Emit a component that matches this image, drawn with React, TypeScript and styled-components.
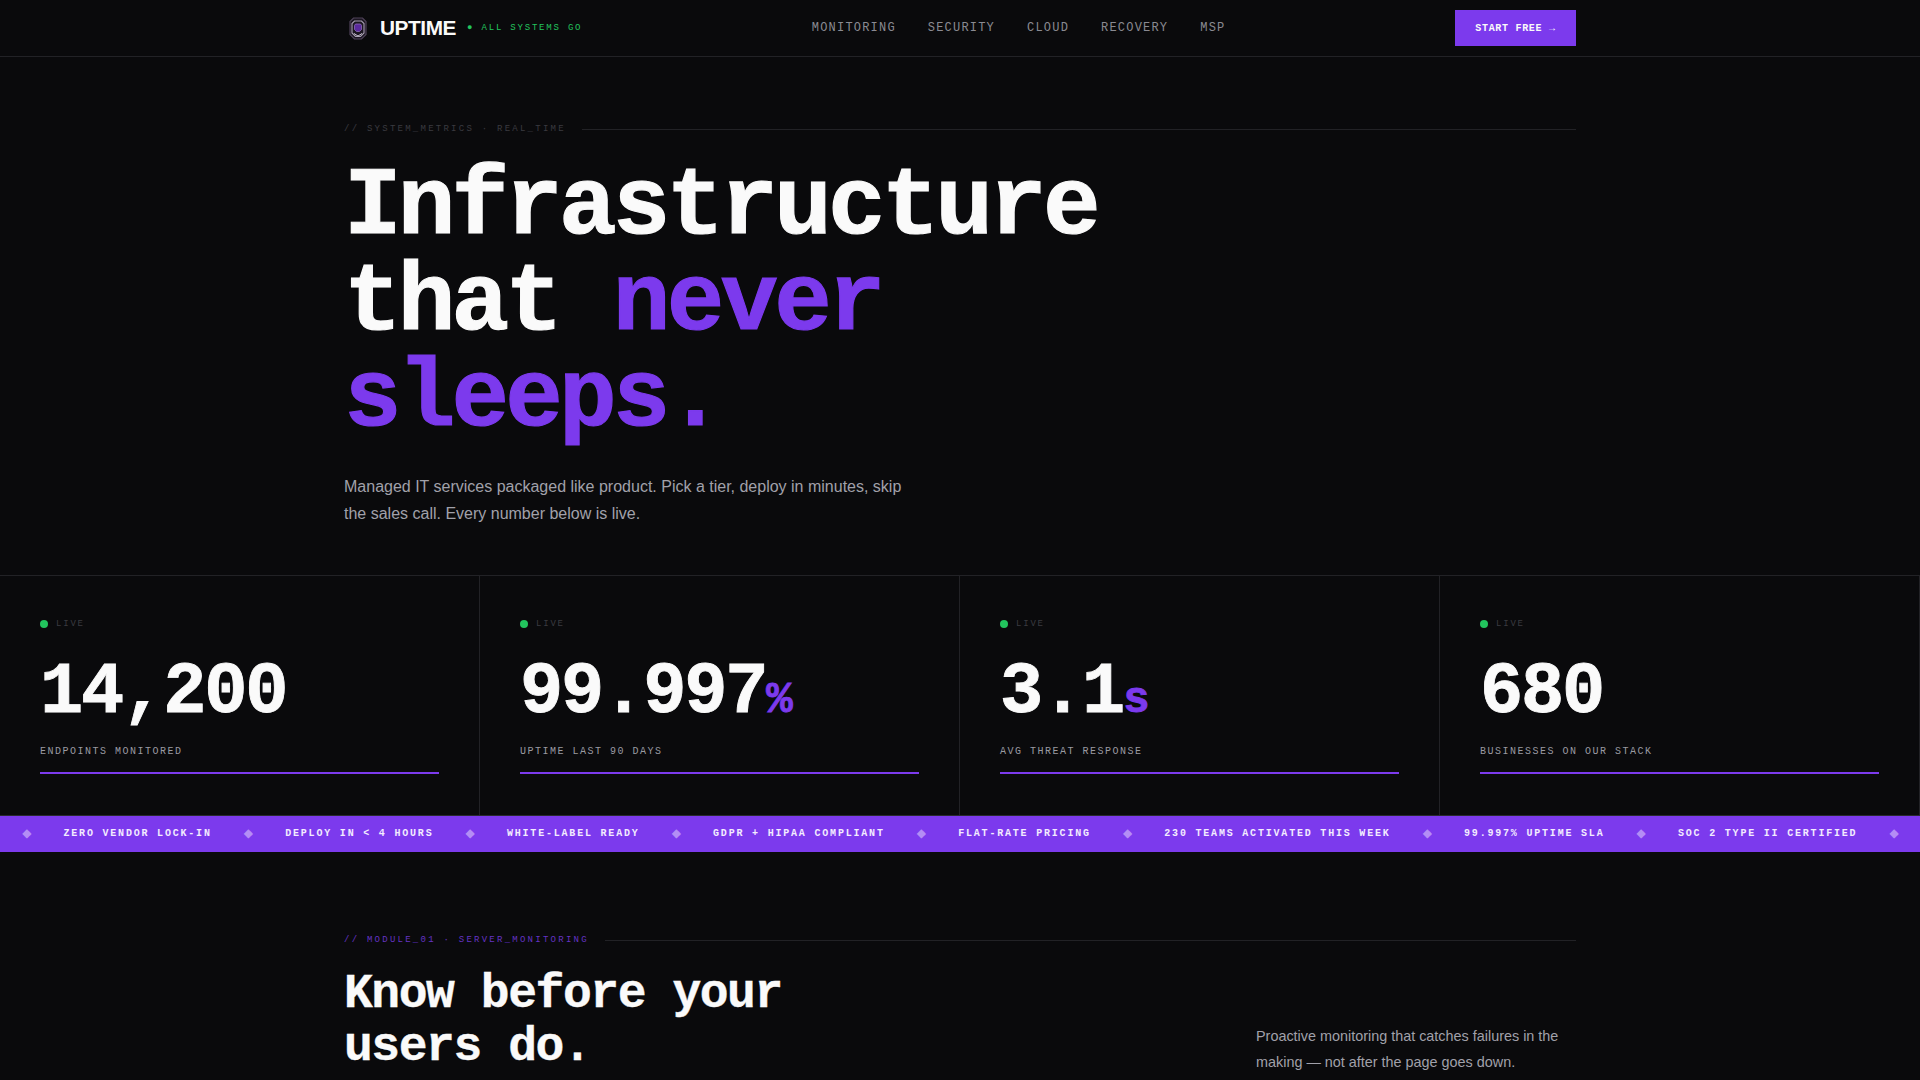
import React from "react";
import styled, { createGlobalStyle } from "styled-components";

const MONO = `"Liberation Mono", monospace`;
const SANS = `"Liberation Sans", Arial, sans-serif`;
const BG = "#0a0a0c";
const LINE = "#222226";
const PURPLE = "#7c3aed";
const GREEN = "#22c55e";

const GlobalStyle = createGlobalStyle`
  html, body {
    margin: 0;
    padding: 0;
    background: ${BG};
    color: #fafafa;
    font-family: ${SANS};
    height: 1080px;
    overflow: hidden;
  }
  * { box-sizing: border-box; }
`;

const NAV_LINKS = ["MONITORING", "SECURITY", "CLOUD", "RECOVERY", "MSP"];

const STATS = [
  { value: "14,200", unit: "", label: "ENDPOINTS MONITORED" },
  { value: "99.997", unit: "%", label: "UPTIME LAST 90 DAYS" },
  { value: "3.1", unit: "s", label: "AVG THREAT RESPONSE" },
  { value: "680", unit: "", label: "BUSINESSES ON OUR STACK" },
];

const TICKER = [
  "ZERO VENDOR LOCK-IN",
  "DEPLOY IN < 4 HOURS",
  "WHITE-LABEL READY",
  "GDPR + HIPAA COMPLIANT",
  "FLAT-RATE PRICING",
  "230 TEAMS ACTIVATED THIS WEEK",
  "99.997% UPTIME SLA",
  "SOC 2 TYPE II CERTIFIED",
];

const Logo = () => (
  <svg width="18" height="23" viewBox="0 0 18 23" fill="none">
    <path d="M4.5 1h9L17 4.5v13L12.5 22h-7L1 17.5v-13z" fill="#1c1622" stroke="#4f4259" strokeWidth="1.2" />
    <path d="M5.5 4h7L15 6.500v9.500L11.500 19.500h-5L3 16V6.500z" stroke="#a8a0b2" strokeWidth="1.1" />
    <path d="M6.500 7h5l1 1.500v4l-2 2h-3l-2-2v-4z" fill="#5b2a9e" stroke="#8d6bb8" strokeWidth="0.8" />
    <path d="M5 16.500l4 2.500 4-2.500" stroke="#c9c2d0" strokeWidth="1" />
  </svg>
);

export default function App() {
  return (
    <Page>
      <GlobalStyle />
      <Nav>
        <NavInner>
          <Brand>
            <Logo />
            <BrandName>UPTIME</BrandName>
            <Status>● ALL SYSTEMS GO</Status>
          </Brand>
          <NavLinks>
            {NAV_LINKS.map((link) => (
              <NavLink key={link}>{link}</NavLink>
            ))}
          </NavLinks>
          <StartButton>START FREE →</StartButton>
        </NavInner>
      </Nav>

      <Hero>
        <Eyebrow>
          <EyebrowText>// SYSTEM_METRICS · REAL_TIME</EyebrowText>
          <EyebrowRule />
        </Eyebrow>
        <HeroTitle>
          Infrastructure
          <br />
          that <Accent>never</Accent>
          <br />
          <Accent>sleeps.</Accent>
        </HeroTitle>
        <HeroCopy>
          Managed IT services packaged like product. Pick a tier, deploy in minutes, skip the sales call. Every number
          below is live.
        </HeroCopy>
      </Hero>

      <StatGrid>
        {STATS.map((stat) => (
          <StatCell key={stat.label}>
            <LiveRow>
              <LiveDot />
              <LiveText>LIVE</LiveText>
            </LiveRow>
            <StatValue>
              {stat.value}
              {stat.unit && <StatUnit>{stat.unit}</StatUnit>}
            </StatValue>
            <StatLabel>{stat.label}</StatLabel>
            <StatBar />
          </StatCell>
        ))}
      </StatGrid>

      <Ticker>
        {TICKER.map((item) => (
          <React.Fragment key={item}>
            <Diamond>◆</Diamond>
            <TickerItem>{item}</TickerItem>
          </React.Fragment>
        ))}
        <Diamond>◆</Diamond>
      </Ticker>

      <Module>
        <Eyebrow>
          <ModuleEyebrowText>// MODULE_01 · SERVER_MONITORING</ModuleEyebrowText>
          <EyebrowRule />
        </Eyebrow>
        <ModuleRow>
          <ModuleTitle>
            Know before your
            <br />
            users do.
          </ModuleTitle>
          <ModuleCopy>Proactive monitoring that catches failures in the making — not after the page goes down.</ModuleCopy>
        </ModuleRow>
      </Module>
    </Page>
  );
}

const Page = styled.div`
  width: 1920px;
  height: 1080px;
  overflow: hidden;
  background: ${BG};
`;

const Nav = styled.header`
  height: 57px;
  border-bottom: 1px solid ${LINE};
`;

const NavInner = styled.div`
  width: 1232px;
  height: 56px;
  margin: 0 auto;
  display: flex;
  justify-content: space-between;
  align-items: center;
`;

const Brand = styled.div`
  display: flex;
  align-items: center;
  padding-left: 5px;
`;

const BrandName = styled.span`
  margin-left: 13px;
  font-size: 20.8px;
  font-weight: 700;
  letter-spacing: -0.02em;
  color: #fafafa;
`;

const Status = styled.span`
  margin-left: 11px;
  font-family: ${MONO};
  font-size: 9px;
  letter-spacing: 0.2em;
  color: ${GREEN};
`;

const NavLinks = styled.nav`
  display: flex;
  gap: 32px;
`;

const NavLink = styled.a`
  font-family: ${MONO};
  font-size: 12px;
  letter-spacing: 0.1em;
  color: #8a8a92;
`;

const StartButton = styled.button`
  width: 121px;
  height: 36px;
  border: 0;
  background: ${PURPLE};
  color: #fafafa;
  font-family: ${MONO};
  font-size: 10px;
  font-weight: 700;
  letter-spacing: 0.07em;
`;

const Hero = styled.section`
  width: 1232px;
  height: 518px;
  margin: 0 auto;
  padding-top: 67px;
`;

const Eyebrow = styled.div`
  display: flex;
  align-items: center;
  gap: 16px;
`;

const EyebrowText = styled.span`
  font-family: ${MONO};
  font-size: 9px;
  letter-spacing: 0.25em;
  color: #3a3a40;
  white-space: nowrap;
`;

const ModuleEyebrowText = styled(EyebrowText)`
  color: #6533c4;
`;

const EyebrowRule = styled.span`
  flex: 1;
  height: 1px;
  background: ${LINE};
`;

const HeroTitle = styled.h1`
  margin: 26px 0 0;
  font-family: ${MONO};
  font-size: 96px;
  font-weight: 700;
  line-height: 1;
  letter-spacing: -0.04em;
  -webkit-text-stroke: 0.012em currentColor;
  color: #fafafa;
`;

const Accent = styled.span`
  color: ${PURPLE};
`;

const HeroCopy = styled.p`
  width: 580px;
  margin: 25px 0 0;
  font-size: 16px;
  line-height: 1.7;
  color: #a1a1aa;
`;

const StatGrid = styled.section`
  display: grid;
  grid-template-columns: repeat(4, 1fr);
  height: 240px;
  border-top: 1px solid ${LINE};
`;

const StatCell = styled.div`
  padding: 40px 40px 0;
  border-right: 1px solid ${LINE};
`;

const LiveRow = styled.div`
  display: flex;
  align-items: center;
  gap: 8px;
  height: 16px;
`;

const LiveDot = styled.span`
  width: 8px;
  height: 8px;
  border-radius: 50%;
  background: ${GREEN};
`;

const LiveText = styled.span`
  font-family: ${MONO};
  font-size: 9px;
  letter-spacing: 0.2em;
  color: #3a3a40;
`;

const StatValue = styled.div`
  margin-top: 25px;
  font-family: ${MONO};
  font-size: 72px;
  font-weight: 700;
  line-height: 1;
  letter-spacing: -0.03em;
  -webkit-text-stroke: 0.012em currentColor;
  color: #fafafa;
`;

const StatUnit = styled.span`
  font-size: 44px;
  color: ${PURPLE};
`;

const StatLabel = styled.div`
  margin-top: 17px;
  font-family: ${MONO};
  font-size: 10px;
  letter-spacing: 0.15em;
  color: #9a9aa2;
`;

const StatBar = styled.div`
  height: 2px;
  margin-top: 15px;
  background: ${PURPLE};
`;

const Ticker = styled.div`
  display: flex;
  align-items: center;
  gap: 32px;
  height: 37px;
  padding: 0 0 2px 22px;
  background: ${PURPLE};
  border-top: 1px solid #2a2a30;
  white-space: nowrap;
`;

const Diamond = styled.span`
  width: 9.5px;
  font-family: "DejaVu Sans", sans-serif;
  font-size: 12px;
  text-align: center;
  color: #b48df5;
`;

const TickerItem = styled.span`
  font-family: ${MONO};
  font-size: 10px;
  font-weight: 700;
  letter-spacing: 0.18em;
  color: #f3ecff;
`;

const Module = styled.section`
  width: 1232px;
  margin: 0 auto;
  padding-top: 83px;
`;

const ModuleRow = styled.div`
  display: flex;
  justify-content: space-between;
  align-items: flex-end;
  margin-top: 23px;
`;

const ModuleTitle = styled.h2`
  margin: 0 0 2px;
  font-family: ${MONO};
  font-size: 48px;
  font-weight: 700;
  line-height: 1.1;
  letter-spacing: -0.03em;
  -webkit-text-stroke: 0.008em currentColor;
  color: #fafafa;
`;

const ModuleCopy = styled.p`
  width: 320px;
  margin: 0;
  font-size: 14.4px;
  line-height: 1.8;
  color: #a1a1aa;
`;
